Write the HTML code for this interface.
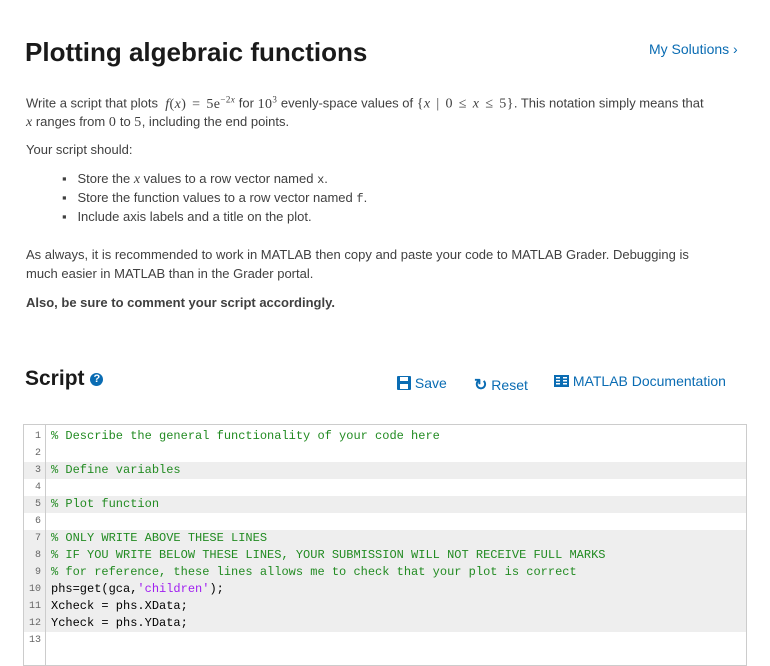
<!DOCTYPE html>
<html><head><style>
body{margin:0;width:770px;height:660px;background:#fff;font-family:"Liberation Sans",sans-serif;color:#404040;position:relative;overflow:hidden}
.a{position:absolute;white-space:nowrap}
h1{position:absolute;left:25px;top:37px;margin:0;font-size:26px;font-weight:bold;color:#1a1a1a}
.p{font-size:13px;color:#404040}
.m{font-family:"Liberation Serif",serif;font-style:italic}
.r{font-family:"Liberation Serif",serif;word-spacing:2px;letter-spacing:0.4px}
.blue{color:#0a6cb3}
#ed{position:absolute;left:23px;top:424px;width:722px;height:240px;border:1px solid #ccc;background:#fff}
#gut{position:absolute;left:0;top:0;width:21px;height:240px;border-right:1px solid #ccc}
.ln{position:absolute;left:0;width:722px;height:17px;font-family:"Liberation Mono",monospace;font-size:12px;line-height:17px}
.ln .n{position:absolute;left:0;width:17px;text-align:right;font-size:10px;color:#666}
.ln .c{position:absolute;left:27px;color:#000}
.g{background:#eeeeee}
.ln .c.cm{color:#228b22}
.st{color:#a020f0}
</style></head><body>
<h1>Plotting algebraic functions</h1>
<div class="a blue" style="left:649px;top:41px;font-size:14px">My Solutions ›</div>
<div class="a p" style="left:26px;top:94px">Write a script that plots &nbsp;<span class="r" style="font-size:14px"><i>f</i>(<i>x</i>) = 5e<sup style="font-size:9px">−2<i>x</i></sup></span> for <span class="r" style="font-size:14px">10<sup style="font-size:9px">3</sup></span> evenly-space values of <span class="r" style="font-size:14px">{<i>x</i> | 0 ≤ <i>x</i> ≤ 5}</span>. This notation simply means that</div>
<div class="a p" style="left:26px;top:114px"><span class="m" style="font-size:14px">x</span> ranges from <span class="r" style="font-size:14px">0</span> to <span class="r" style="font-size:14px">5</span>, including the end points.</div>
<div class="a p" style="left:26px;top:142px">Your script should:</div>
<div class="a p" style="left:62px;top:171px">▪&nbsp;&nbsp; Store the <span class="m" style="font-size:14px">x</span> values to a row vector named <span style="font-family:'Liberation Mono',monospace;font-size:12px">x</span>.</div>
<div class="a p" style="left:62px;top:190px">▪&nbsp;&nbsp; Store the function values to a row vector named <span style="font-family:'Liberation Mono',monospace;font-size:12px">f</span>.</div>
<div class="a p" style="left:62px;top:209px">▪&nbsp;&nbsp; Include axis labels and a title on the plot.</div>
<div class="a p" style="left:26px;top:247px">As always, it is recommended to work in MATLAB then copy and paste your code to MATLAB Grader. Debugging is</div>
<div class="a p" style="left:26px;top:266px">much easier in MATLAB than in the Grader portal.</div>
<div class="a p" style="left:26px;top:295px;font-weight:bold">Also, be sure to comment your script accordingly.</div>
<div class="a" style="left:25px;top:367px;font-size:21px;font-weight:bold;color:#1a1a1a">Script <span style="display:inline-block;width:13px;height:13px;border-radius:50%;background:#0a6cb3;color:#fff;font-size:11px;line-height:13px;text-align:center;vertical-align:3px">?</span></div>
<div class="a blue" style="left:397px;top:375px;font-size:14px"><svg width="14" height="14" viewBox="0 0 14 14" style="vertical-align:-2px"><rect x="0" y="0" width="14" height="14" rx="1" fill="#0a6cb3"/><rect x="3" y="1" width="8" height="4" fill="#fff"/><rect x="3" y="8" width="8" height="5" fill="#fff"/></svg> Save</div>
<div class="a blue" style="left:474px;top:375px;font-size:14px"><span style="font-size:16px;font-weight:bold">↻</span> Reset</div>
<div class="a blue" style="left:554px;top:373px;font-size:14px"><svg width="15" height="12" viewBox="0 0 15 12" style="vertical-align:-1px"><rect width="15" height="12" fill="#0a6cb3"/><rect x="2" y="2" width="4" height="1.5" fill="#fff"/><rect x="2" y="5" width="4" height="1.5" fill="#fff"/><rect x="2" y="8" width="4" height="1.5" fill="#fff"/><rect x="9" y="2" width="4" height="1.5" fill="#fff"/><rect x="9" y="5" width="4" height="1.5" fill="#fff"/><rect x="9" y="8" width="4" height="1.5" fill="#fff"/></svg> MATLAB Documentation</div>
<div id="ed">
<div class="ln" style="top:3px"><span class="n">1</span><span class="c cm">% Describe the general functionality of your code here</span></div>
<div class="ln" style="top:20px"><span class="n">2</span></div>
<div class="ln g" style="top:37px"><span class="n">3</span><span class="c cm">% Define variables</span></div>
<div class="ln" style="top:54px"><span class="n">4</span></div>
<div class="ln g" style="top:71px"><span class="n">5</span><span class="c cm">% Plot function</span></div>
<div class="ln" style="top:88px"><span class="n">6</span></div>
<div class="ln g" style="top:105px"><span class="n">7</span><span class="c cm">% ONLY WRITE ABOVE THESE LINES</span></div>
<div class="ln g" style="top:122px"><span class="n">8</span><span class="c cm">% IF YOU WRITE BELOW THESE LINES, YOUR SUBMISSION WILL NOT RECEIVE FULL MARKS</span></div>
<div class="ln g" style="top:139px"><span class="n">9</span><span class="c cm">% for reference, these lines allows me to check that your plot is correct</span></div>
<div class="ln g" style="top:156px"><span class="n">10</span><span class="c">phs=get(gca,<span class="st">'children'</span>);</span></div>
<div class="ln g" style="top:173px"><span class="n">11</span><span class="c">Xcheck = phs.XData;</span></div>
<div class="ln g" style="top:190px"><span class="n">12</span><span class="c">Ycheck = phs.YData;</span></div>
<div class="ln" style="top:207px"><span class="n">13</span></div>
<div id="gut"></div>
</div>
</body></html>
